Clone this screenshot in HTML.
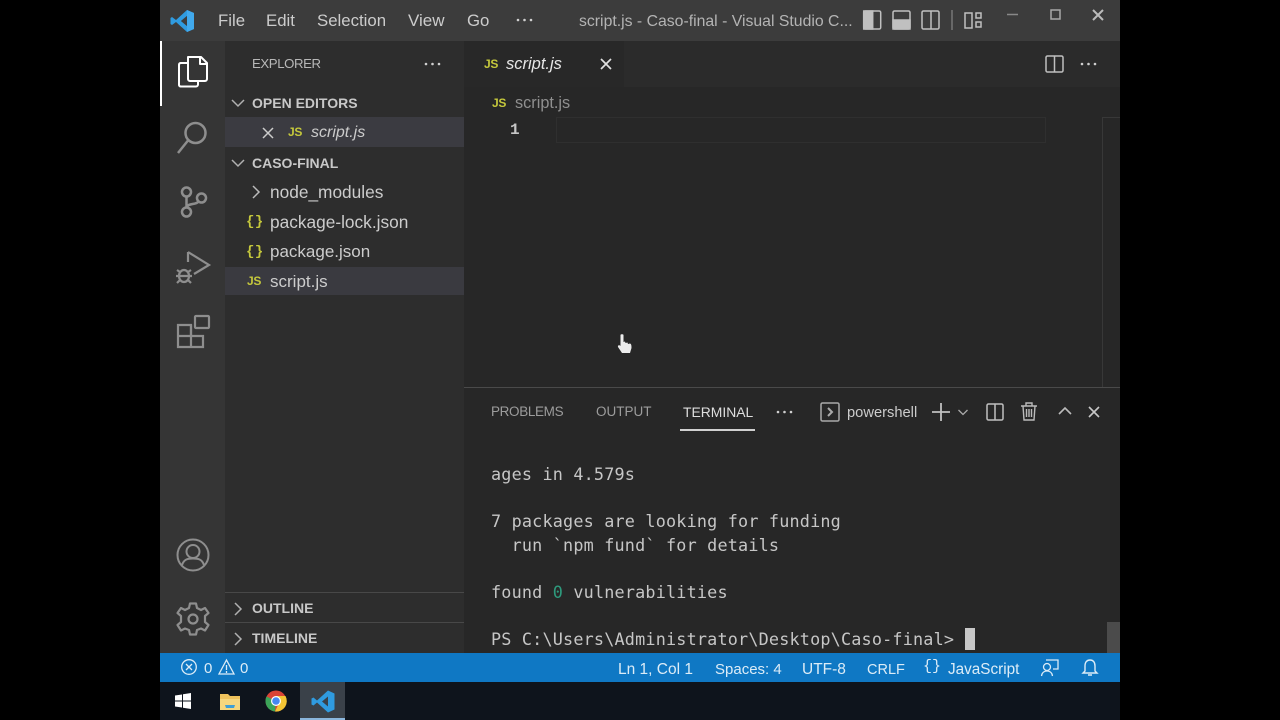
<!DOCTYPE html>
<html><head><meta charset="utf-8"><style>
html,body{margin:0;padding:0;background:#000;width:1280px;height:720px;overflow:hidden}
#a{position:absolute;left:160px;top:0;width:960px;height:720px;overflow:hidden;background:#272727;font-family:"Liberation Sans",sans-serif}
.b{position:absolute}
.t{position:absolute;white-space:nowrap;line-height:20px;color:#ccc;font-size:16px}
.u{font-weight:bold;font-size:14px;color:#c8c8c8}
.m{font-family:"DejaVu Sans Mono",monospace;font-size:16.800px;letter-spacing:.19px;color:#c6c6c6;line-height:20px;position:absolute;white-space:pre;left:331px}
.js{position:absolute;font-weight:bold;font-size:12px;letter-spacing:-.3px;color:#c5c83c;line-height:14px;white-space:nowrap}
.br{position:absolute;font-weight:bold;font-size:14px;letter-spacing:.5px;color:#c5c83c;line-height:14px;font-family:"Liberation Mono",monospace;white-space:nowrap}
svg{position:absolute;overflow:visible;fill:none}
.d circle{fill:#d0d0d0}
</style></head><body><div id="a">
<div class="b" style="left:0;top:0;width:960px;height:41px;background:#3c3c3c"></div>
<div class="b" style="left:0;top:41px;width:65px;height:612px;background:#353535"></div>
<div class="b" style="left:65px;top:41px;width:239px;height:612px;background:#2d2d2d"></div>
<div class="b" style="left:304px;top:41px;width:656px;height:46px;background:#2b2b2b"></div>
<div class="b" style="left:304px;top:41px;width:160px;height:46px;background:#282828"></div>
<div class="b" style="left:0;top:41px;width:2px;height:65px;background:#fff"></div>

<svg style="left:10px;top:9px" width="26" height="24" viewBox="0 0 26 24"><path d="M17 1L24 4V20L17 23L6 13L2 16L0.500 15V9L2 8L6 11Z" fill="#2f9be0"/><path d="M17 7L11 12L17 17Z" fill="#3c3c3c"/><path d="M17 1L24 4V20L17 23Z" fill="#41a9ec"/><path d="M17 7L11 12L17 17Z" fill="#3c3c3c"/></svg>
<div class="t" style="left:58px;top:11px;font-size:16.800px">File</div>
<div class="t" style="left:106px;top:11px;font-size:16.800px">Edit</div>
<div class="t" style="left:157px;top:11px;font-size:16.800px">Selection</div>
<div class="t" style="left:248px;top:11px;font-size:17px">View</div>
<div class="t" style="left:307px;top:11px;font-size:16.800px">Go</div>
<svg class="d" style="left:356px;top:18px" width="18" height="4"><circle cx="2" cy="2" r="1.300"/><circle cx="8.500" cy="2" r="1.300"/><circle cx="15" cy="2" r="1.300"/></svg>
<div class="t" style="left:419px;top:12px;font-size:15.800px;color:#b4b4b4">script.js - Caso-final - Visual Studio C...</div>

<svg style="left:703px;top:10px" width="120" height="20" viewBox="0 0 120 20" stroke="#c0c0c0" stroke-width="1.500"><rect x="0.700" y="1" width="17" height="18" rx="1.500"/><rect x="0.700" y="1" width="9" height="18" fill="#c0c0c0"/><rect x="30" y="1" width="17" height="18" rx="1.500"/><rect x="30" y="10" width="17" height="9" fill="#c0c0c0"/><rect x="59" y="1" width="17" height="18" rx="1.500"/><path d="M68 1V19"/><path d="M89 0V20" stroke="#777"/><rect x="102" y="3" width="7" height="15"/><rect x="113" y="3" width="5" height="5"/><rect x="113" y="12" width="5" height="5"/></svg>
<svg style="left:846px;top:8px" width="105" height="14" viewBox="0 0 105 14" stroke="#a8a8a8" stroke-width="1.500"><path d="M1 6.500H12" stroke="#888"/><rect x="45" y="2" width="9" height="9"/><path d="M87 2L97 12M97 2L87 12" stroke="#bbb" stroke-width="2"/></svg>

<!-- activity -->
<svg style="left:17px;top:55px" width="32" height="34" viewBox="0 0 32 34" stroke="#fff" stroke-width="2" stroke-linejoin="round"><path d="M11 8H3.500a2 2 0 0 0-1.500 2V30a2 2 0 0 0 1.500 1.500H19a2 2 0 0 0 2-2V26" /><path d="M11 2H24L30 8V24a2 2 0 0 1-2 2H13a2 2 0 0 1-2-2Z"/><path d="M23 2V9H30"/></svg>
<svg style="left:17px;top:121px" width="32" height="34" viewBox="0 0 32 34" stroke="#8e8e8e" stroke-width="2.500"><circle cx="18.500" cy="12" r="10"/><path d="M11 19.500L1 32"/></svg>
<svg style="left:19px;top:185px" width="30" height="34" viewBox="0 0 30 34" stroke="#8e8e8e" stroke-width="2.500"><circle cx="7.500" cy="7" r="4.500"/><circle cx="7.500" cy="27" r="4.500"/><circle cx="22.500" cy="13" r="4.500"/><path d="M7.500 11.500V22.500M7.500 22C9 18 18 20 20 16"/></svg>
<svg style="left:16px;top:250px" width="36" height="36" viewBox="0 0 36 36" stroke="#8e8e8e" stroke-width="2.200"><path d="M12 2L33 15L18 24"/><path d="M12 2V12"/><ellipse cx="8" cy="26" rx="5" ry="6"/><path d="M1 20L4 22M15 20L12 22M0 26H3M16 26H13M1 33L4 30M15 33L12 30M3 26H13"/></svg>
<svg style="left:16px;top:314px" width="36" height="36" viewBox="0 0 36 36" stroke="#8e8e8e" stroke-width="2.200"><rect x="19" y="2" width="14" height="12" rx="1"/><path d="M2 11H15V33H2ZM2 22H27V33H15"/><path d="M15 22V11"/></svg>
<svg style="left:16px;top:538px" width="34" height="34" viewBox="0 0 34 34" stroke="#8e8e8e" stroke-width="2"><circle cx="17" cy="17" r="15.500"/><circle cx="17" cy="13.500" r="6.500"/><path d="M6 27C8 21 12 20.500 17 20.500S26 21 28 27"/></svg>
<svg style="left:16px;top:602px" width="34" height="34" viewBox="0 0 34 34" stroke="#8e8e8e" stroke-width="2.200" stroke-linejoin="round"><path d="M14 1.500H20L21 6L25 8L29 6L32.500 11L29 14V20L32.500 23L29 28.500L25 26.500L21 28L20 32.500H14L13 28L9 26.500L5 28.500L1.500 23L5 20V14L1.500 11L5 6L9 8L13 6Z"/><circle cx="17" cy="17" r="4.500"/></svg>

<!-- sidebar -->
<div class="t" style="left:92px;top:54px;font-size:13.200px;letter-spacing:-.4px;color:#b8b8b8">EXPLORER</div>
<svg class="d" style="left:264px;top:62px" width="18" height="4"><circle cx="2" cy="2" r="1.300"/><circle cx="8.500" cy="2" r="1.300"/><circle cx="15" cy="2" r="1.300"/></svg>
<svg style="left:71px;top:98px" width="14" height="10" viewBox="0 0 14 10" stroke="#b0b0b0" stroke-width="1.500"><path d="M1 2L7 8L13 2"/></svg>
<div class="t u" style="left:92px;top:93px">OPEN EDITORS</div>
<div class="b" style="left:65px;top:117px;width:239px;height:30px;background:#3b3b41"></div>
<svg style="left:102px;top:127px" width="12" height="12" viewBox="0 0 12 12" stroke="#ccc" stroke-width="1.500"><path d="M1 1L11 11M11 1L1 11"/></svg>
<div class="js" style="left:128px;top:125px">JS</div>
<div class="t" style="left:151px;top:123px;font-style:italic">script.js</div>
<svg style="left:71px;top:158px" width="14" height="10" viewBox="0 0 14 10" stroke="#b0b0b0" stroke-width="1.500"><path d="M1 2L7 8L13 2"/></svg>
<div class="t u" style="left:92px;top:153px">CASO-FINAL</div>
<svg style="left:91px;top:185px" width="10" height="14" viewBox="0 0 10 14" stroke="#bbb" stroke-width="1.500"><path d="M2 1L8 7L2 13"/></svg>
<div class="t" style="left:110px;top:182px;font-size:17.300px">node_modules</div>
<div class="br" style="left:86px;top:215px">{}</div>
<div class="t" style="left:110px;top:212px;font-size:17.300px">package-lock.json</div>
<div class="br" style="left:86px;top:245px">{}</div>
<div class="t" style="left:110px;top:242px;font-size:17px">package.json</div>
<div class="b" style="left:65px;top:267px;width:239px;height:28px;background:#3a3a40"></div>
<div class="js" style="left:87px;top:274px">JS</div>
<div class="t" style="left:110px;top:272px;font-size:17px">script.js</div>
<div class="b" style="left:65px;top:592px;width:239px;height:1px;background:#484848"></div>
<svg style="left:73px;top:602px" width="10" height="14" viewBox="0 0 10 14" stroke="#b0b0b0" stroke-width="1.500"><path d="M2 1L8 7L2 13"/></svg>
<div class="t u" style="left:92px;top:598px">OUTLINE</div>
<div class="b" style="left:65px;top:622px;width:239px;height:1px;background:#484848"></div>
<svg style="left:73px;top:632px" width="10" height="14" viewBox="0 0 10 14" stroke="#b0b0b0" stroke-width="1.500"><path d="M2 1L8 7L2 13"/></svg>
<div class="t u" style="left:92px;top:628px">TIMELINE</div>

<!-- editor -->
<div class="js" style="left:324px;top:57px">JS</div>
<div class="t" style="left:346px;top:54px;font-size:16.500px;font-style:italic;color:#e6e6e6">script.js</div>
<svg style="left:440px;top:58px" width="12" height="12" viewBox="0 0 12 12" stroke="#e0e0e0" stroke-width="1.700"><path d="M1 1L11 11M11 1L1 11"/></svg>
<svg style="left:885px;top:55px" width="19" height="18" viewBox="0 0 19 18" stroke="#c0c0c0" stroke-width="1.500"><rect x="1" y="1" width="17" height="16" rx="1.500"/><path d="M9.500 1V17"/></svg>
<svg class="d" style="left:920px;top:62px" width="18" height="4"><circle cx="2" cy="2" r="1.300"/><circle cx="8.500" cy="2" r="1.300"/><circle cx="15" cy="2" r="1.300"/></svg>
<div class="js" style="left:332px;top:96px">JS</div>
<div class="t" style="left:355px;top:93px;font-size:16.300px;color:#8f8f8f">script.js</div>
<div class="b" style="left:396px;top:117px;width:490px;height:26px;border:1px solid #2f2f2f;box-sizing:border-box"></div>
<div class="t" style="left:350px;top:120px;font-family:'Liberation Mono',monospace;font-size:16px;font-weight:bold;color:#c6c6c6">1</div>
<div class="b" style="left:942px;top:117px;width:18px;height:270px;border-left:1px solid #383838;box-sizing:border-box"></div>
<div class="b" style="left:942px;top:117px;width:18px;height:1px;background:#383838"></div>
<svg style="left:457px;top:333px" width="16" height="22" viewBox="0 0 16 22"><path d="M3.500 2C3.500 1 6.500 1 6.500 2V9L8 8.500L8.500 10L10.500 9.500L11 11L13 10.500C14.500 11 14.500 13 14.500 15L13 20H5L1 14C0.500 12.500 2 11.500 3.500 13Z" fill="#ececec"/></svg>

<!-- panel -->
<div class="b" style="left:304px;top:387px;width:656px;height:1px;background:#4a4a4a"></div>
<div class="t" style="left:331px;top:402px;font-size:13.500px;letter-spacing:-.35px;color:#9c9c9c">PROBLEMS</div>
<div class="t" style="left:436px;top:402px;font-size:13.500px;color:#9c9c9c">OUTPUT</div>
<div class="t" style="left:523px;top:402px;font-size:13.900px;color:#dedede">TERMINAL</div>
<div class="b" style="left:520px;top:429px;width:75px;height:2px;background:#d0d0d0"></div>
<svg class="d" style="left:616px;top:410px" width="18" height="4"><circle cx="2" cy="2" r="1.300"/><circle cx="8.500" cy="2" r="1.300"/><circle cx="15" cy="2" r="1.300"/></svg>
<svg style="left:660px;top:402px" width="20" height="20" viewBox="0 0 20 20" stroke="#aaa" stroke-width="1.500"><rect x="1" y="1" width="18" height="18" rx="1.500"/><path d="M8 6L12 10L8 14" stroke-width="2"/></svg>
<div class="t" style="left:687px;top:403px;font-size:14.700px">powershell</div>
<svg style="left:772px;top:403px" width="18" height="18" viewBox="0 0 18 18" stroke="#c0c0c0" stroke-width="1.800"><path d="M0 9H18M9 0V18"/></svg>
<svg style="left:798px;top:409px" width="10" height="7" viewBox="0 0 10 7" stroke="#aaa" stroke-width="1.300"><path d="M0.500 1L5 5.500L9.500 1"/></svg>
<svg style="left:826px;top:403px" width="18" height="18" viewBox="0 0 18 18" stroke="#c0c0c0" stroke-width="1.500"><rect x="1" y="1" width="16" height="16" rx="1.500"/><path d="M9 1V17"/></svg>
<svg style="left:861px;top:402px" width="16" height="19" viewBox="0 0 16 19" stroke="#bbb" stroke-width="1.400"><path d="M0 4H16M5 4V1H11V4M2 4L3 18H13L14 4M5.500 7V15M8 7V15M10.500 7V15"/></svg>
<svg style="left:898px;top:406px" width="14" height="10" viewBox="0 0 14 10" stroke="#bbb" stroke-width="1.600"><path d="M1 8L7 2L13 8"/></svg>
<svg style="left:928px;top:406px" width="12" height="12" viewBox="0 0 12 12" stroke="#c8c8c8" stroke-width="1.600"><path d="M1 1L11 11M11 1L1 11"/></svg>

<div class="m" style="top:464px">ages in 4.579s</div>
<div class="m" style="top:511px">7 packages are looking for funding</div>
<div class="m" style="top:535px">  run `npm fund` for details</div>
<div class="m" style="top:582px">found <span style="color:#2e9a7d">0</span> vulnerabilities</div>
<div class="m" style="top:629px">PS C:\Users\Administrator\Desktop\Caso-final&gt;</div>
<div class="b" style="left:805px;top:628px;width:10px;height:22px;background:#c8c8c8"></div>
<div class="b" style="left:947px;top:622px;width:13px;height:31px;background:#4b4b4b"></div>

<!-- status -->
<div class="b" style="left:0;top:653px;width:960px;height:29px;background:#0f78c4"></div>
<svg style="left:21px;top:659px" width="16" height="16" viewBox="0 0 16 16" stroke="#dcecf7" stroke-width="1.300"><circle cx="8" cy="8" r="7.300"/><path d="M5 5L11 11M11 5L5 11"/></svg>
<div class="t" style="left:44px;top:659px;font-size:15px;color:#dcecf7">0</div>
<svg style="left:58px;top:659px" width="17" height="16" viewBox="0 0 17 16" stroke="#dcecf7" stroke-width="1.300"><path d="M8.500 1L16 15H1ZM8.500 6V11M8.500 12V14"/></svg>
<div class="t" style="left:80px;top:659px;font-size:15px;color:#dcecf7">0</div>
<div class="t" style="left:458px;top:660px;font-size:15.500px;color:#dcecf7">Ln 1, Col 1</div>
<div class="t" style="left:555px;top:660px;font-size:15px;color:#dcecf7">Spaces: 4</div>
<div class="t" style="left:642px;top:660px;font-size:15.500px;color:#dcecf7">UTF-8</div>
<div class="t" style="left:707px;top:660px;font-size:14.500px;color:#dcecf7">CRLF</div>
<div class="t" style="left:763px;top:657px;font-size:15px;font-family:'Liberation Mono',monospace;color:#dcecf7">{}</div>
<div class="t" style="left:788px;top:660px;font-size:15.300px;color:#dcecf7">JavaScript</div>
<svg style="left:881px;top:659px" width="18" height="18" viewBox="0 0 18 18" stroke="#dcecf7" stroke-width="1.300"><path d="M5 1H17V10H12"/><circle cx="6" cy="8" r="3.500"/><path d="M0.500 17C1 13 4 12 6 12S11 13 11.500 17"/></svg>
<svg style="left:922px;top:659px" width="16" height="18" viewBox="0 0 16 18" stroke="#dcecf7" stroke-width="1.400"><path d="M3 12V7C3 3 5 1 8 1S13 3 13 7V12L15 14H1ZM6 16H10"/></svg>

<!-- taskbar -->
<div class="b" style="left:0;top:682px;width:960px;height:38px;background:#0e141c"></div>
<div class="b" style="left:140px;top:682px;width:45px;height:38px;background:#3a4149"></div>
<div class="b" style="left:140px;top:718px;width:45px;height:2px;background:#8ab6dc"></div>
<svg style="left:15px;top:693px" width="16" height="16" viewBox="0 0 16 16"><path d="M0 2.500L7 1.500V7.500H0ZM8 1.300L16 0V7.500H8ZM0 8.500H7V14.500L0 13.500ZM8 8.500H16V16L8 14.700Z" fill="#fff"/></svg>
<svg style="left:60px;top:693px" width="20" height="18" viewBox="0 0 20 18"><path d="M0 1H8L10 3H20V17H0Z" fill="#eec25c"/><path d="M0 6H20V17H0Z" fill="#f6d77e"/><path d="M5 12H15L14 15H6Z" fill="#3f9fd6"/></svg>
<svg style="left:105px;top:690px" width="22" height="22" viewBox="0 0 22 22"><circle cx="11" cy="11" r="10.500" fill="#d94436"/><path d="M11 11L1.500 6.500A10.500 10.500 0 0 0 10 21.500Z" fill="#3ba458"/><path d="M11 6H20.500A10.500 10.500 0 0 1 10 21.500L15 11Z" fill="#f4c534"/><circle cx="11" cy="11" r="5" fill="#fff"/><circle cx="11" cy="11" r="3.800" fill="#4688f1"/></svg>
<svg style="left:151px;top:690px" width="24" height="23" viewBox="0 0 24 23"><path d="M17 0.500L23.500 3.500V19.500L17 22.500L6 12.500L2.500 15.500L0.500 14.500V8.500L2.500 7.500L6 10.500Z" fill="#2f9be0"/><path d="M17 6.500L11 11.500L17 16.500Z" fill="#3a4149"/></svg>
</div></body></html>
